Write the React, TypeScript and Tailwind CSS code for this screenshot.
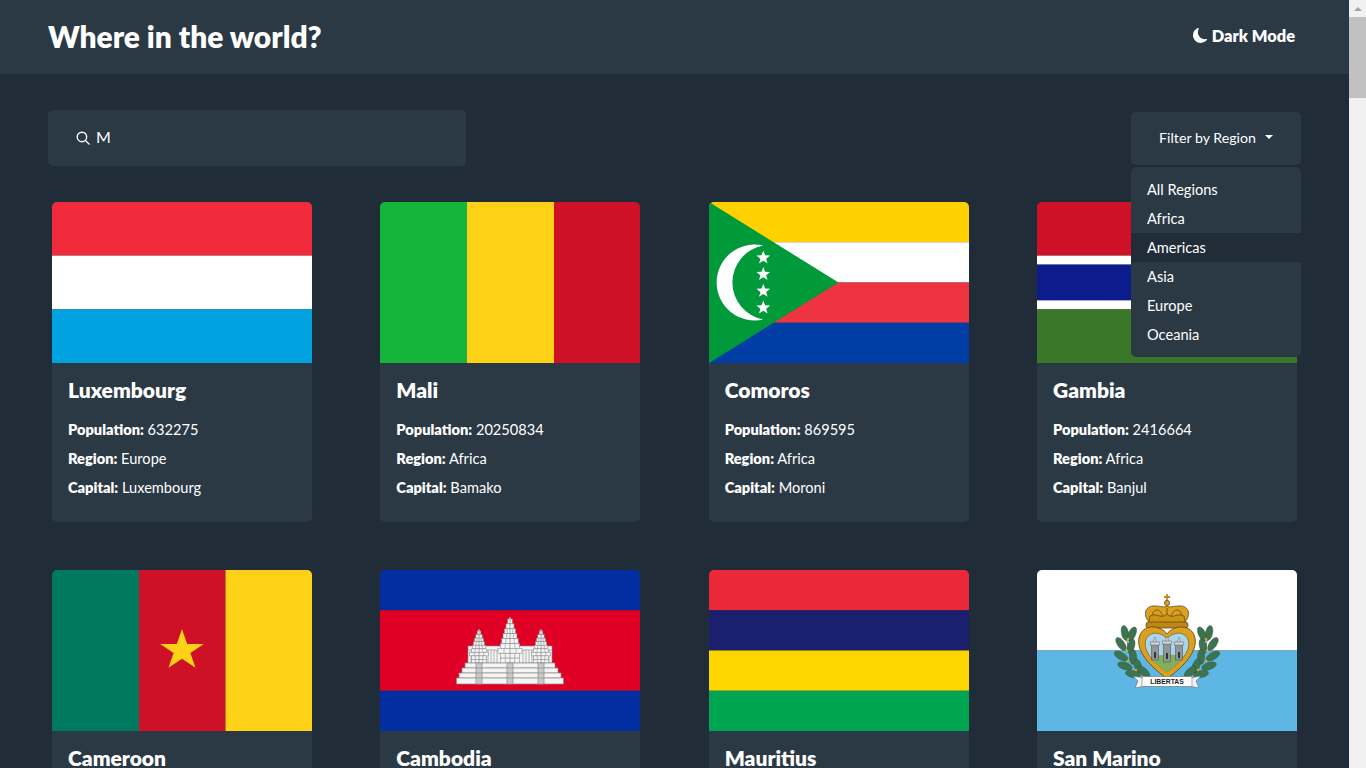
import React from 'react';

const starPoints = (cx: number, cy: number, r: number, inner = 0.42) =>
  Array.from({ length: 10 }, (_, i) => {
    const a = -Math.PI / 2 + (i * Math.PI) / 5;
    const d = i % 2 === 0 ? r : r * inner;
    return `${cx + d * Math.cos(a)},${cy + d * Math.sin(a)}`;
  }).join(' ');

const FlagSvg = ({ children }: { children: React.ReactNode }) => (
  <svg viewBox="0 0 260 161" preserveAspectRatio="none" className="block w-full h-full">
    {children}
  </svg>
);

const Stripes = ({ colors }: { colors: [string, number][] }) => {
  const total = colors.reduce((s, c) => s + c[1], 0);
  let y = 0;
  return (
    <>
      {colors.map(([c, n], i) => {
        const h = (n / total) * 161;
        const el = <rect key={i} x="0" y={y} width="260" height={h} fill={c} />;
        y += h;
        return el;
      })}
    </>
  );
};

const Luxembourg = () => (
  <FlagSvg>
    <Stripes colors={[['#EF2B3C', 1], ['#FFFFFF', 1], ['#00A3E0', 1]]} />
  </FlagSvg>
);

const Mali = () => (
  <FlagSvg>
    <rect width="87" height="161" fill="#14B53A" />
    <rect x="87" width="87" height="161" fill="#FCD116" />
    <rect x="174" width="86" height="161" fill="#CE1126" />
  </FlagSvg>
);

const Comoros = () => (
  <FlagSvg>
    <Stripes colors={[['#FFD100', 1], ['#FFFFFF', 1], ['#EF3340', 1], ['#003DA5', 1]]} />
    <polygon points="0,0 129.5,80.5 0,161" fill="#009A3B" />
    <path d="M54.3 43.5 A38 38 0 1 0 54.3 117.5 A37.6 37.6 0 0 1 54.3 43.5 Z" fill="#fff" />
    {[55.7, 72.3, 89, 105.7].map((y) => (
      <polygon key={y} points={starPoints(54.3, y, 7.2)} fill="#fff" />
    ))}
  </FlagSvg>
);

const Gambia = () => (
  <FlagSvg>
    <Stripes colors={[['#CE1126', 6], ['#FFFFFF', 1], ['#0C1C8C', 4], ['#FFFFFF', 1], ['#3A7728', 6]]} />
  </FlagSvg>
);

const Cameroon = () => (
  <FlagSvg>
    <rect width="87" height="161" fill="#007A5E" />
    <rect x="87" width="86.5" height="161" fill="#CE1126" />
    <rect x="173.5" width="86.5" height="161" fill="#FCD116" />
    <polygon points={starPoints(0, 0, 23, 0.382)} fill="#FCD116" transform="translate(130 80.5) scale(1 0.93)" />
  </FlagSvg>
);

// stacked tiers, wider as they go down, like the towers in the reference
const Tower = ({ x, top, base, w }: { x: number; top: number; base: number; w: number }) => {
  const tiers = 9;
  const h = (base - top - 2) / tiers;
  return (
    <g stroke="#8a8a8a" strokeWidth="0.55" fill="#f4f4f4">
      <path d={`M${x} ${top} L${x + 1.6} ${top + 3} L${x - 1.6} ${top + 3} Z`} />
      {Array.from({ length: tiers }, (_, i) => {
        const t = (i + 1) / tiers;
        const half = (w / 2) * (i > 5 ? 0.78 + (i === 6 ? 0.22 : 0) : Math.pow(t * 1.5, 0.8) * 0.8);
        return (
          <g key={i}>
            <rect x={x - half} y={top + 2 + i * h} width={half * 2} height={h} />
            <line x1={x} x2={x} y1={top + 2 + i * h} y2={top + 2 + (i + 1) * h} stroke="#6f6f6f" />
            {half > 4 && <line x1={x - half / 2} x2={x - half / 2} y1={top + 2 + i * h} y2={top + 2 + (i + 1) * h} />}
            {half > 4 && <line x1={x + half / 2} x2={x + half / 2} y1={top + 2 + i * h} y2={top + 2 + (i + 1) * h} />}
          </g>
        );
      })}
    </g>
  );
};

const Cambodia = () => (
  <FlagSvg>
    <Stripes colors={[['#032EA1', 1], ['#E00025', 2], ['#032EA1', 1]]} />
    <g stroke="#8a8a8a" strokeWidth="0.6" fill="#f4f4f4">
      <rect x="88" y="76" width="84" height="17" />
      {[108, 111, 114, 117, 143, 146, 149, 152, 91, 169].map((x) => (
        <line key={x} x1={x} x2={x} y1="80" y2="93" />
      ))}
      <line x1="88" x2="172" y1="80" y2="80" />
    </g>
    <Tower x={99} top={59} base={93} w={19} />
    <Tower x={161} top={59} base={93} w={19} />
    <Tower x={130} top={47} base={93} w={24} />
    <g stroke="#8a8a8a" strokeWidth="0.7" fill="#f4f4f4">
      <rect x="85" y="93" width="90" height="5" />
      <rect x="82" y="98" width="96" height="5" />
      <rect x="79" y="103" width="102" height="5" />
      <rect x="76.5" y="108" width="107" height="6" />
      {[96, 127, 158].map((x) => (
        <g key={x}>
          <rect x={x} y="93" width="6" height="21" fill="#c9c9c9" />
          <line x1={x} x2={x + 6} y1="98" y2="98" />
          <line x1={x} x2={x + 6} y1="103" y2="103" />
          <line x1={x} x2={x + 6} y1="108" y2="108" />
        </g>
      ))}
    </g>
  </FlagSvg>
);

const Mauritius = () => (
  <FlagSvg>
    <Stripes colors={[['#EA2839', 1], ['#1A206D', 1], ['#FFD500', 1], ['#00A551', 1]]} />
  </FlagSvg>
);

const Laurel = () => (
  <g>
    <path d="M112 108 C98 100 90 84 89 60" fill="none" stroke="#6b5a2a" strokeWidth="0.8" />
    {[
      [88, 63, -12],
      [95, 64, 25],
      [84, 74, -35],
      [94, 76, 15],
      [84, 86, -60],
      [96, 87, 0],
      [88, 96, -72],
      [101, 96, -20],
      [96, 104, -80],
      [107, 102, -45],
    ].map(([x, y, r], i) => (
      <ellipse key={i} cx={x} cy={y} rx="3.6" ry="7.6" fill="#3d7350" stroke="#2a4f36" strokeWidth="0.4" transform={`rotate(${r} ${x} ${y})`} />
    ))}
    {[
      [91, 69],
      [90, 81],
      [91, 91],
      [99, 100],
      [107, 107],
    ].map(([x, y], i) => (
      <circle key={i} cx={x} cy={y} r="1.3" fill="#d9a21f" />
    ))}
  </g>
);

const SanMarino = () => (
  <FlagSvg>
    <Stripes colors={[['#FFFFFF', 1], ['#5EB6E4', 1]]} />
    <Laurel />
    <g transform="matrix(-1 0 0 1 260 0)">
      <Laurel />
    </g>
    {/* crown */}
    <g stroke="#6f4a0c" strokeWidth="0.8">
      <path d="M130 24 v7 M127 27 h6" stroke="#b88a2a" strokeWidth="1.8" fill="none" />
      <circle cx="130" cy="33" r="2.6" fill="#d9a021" />
      <path d="M112 52 C105 44 109 35 118 36 C124 36 127 38 130 36 C133 38 136 36 142 36 C151 35 155 44 148 52 Z" fill="#d9a021" />
      <path d="M117 51 C114 45 116 40 120 40 C124 40 126 45 126 50 M143 51 C146 45 144 40 140 40 C136 40 134 45 134 50 M130 38 V50" fill="none" />
      <path d="M113 46 C120 42 124 50 130 44 C136 50 140 42 147 46 L149 56 H111 Z" fill="#c99417" />
      <rect x="109" y="52" width="42" height="6" rx="2.5" fill="#bd8716" />
    </g>
    {/* shield */}
    <path d="M130 64 C124 55 105 53 102 68 C99 84 118 100 130 108.5 C142 100 161 84 158 68 C155 53 136 55 130 64 Z" fill="#d9a021" stroke="#6f4a0c" strokeWidth="0.9" />
    <path d="M130 69 C124 61 111 61 108.5 71 C106 83 120 95 130 102 C140 95 154 83 151.5 71 C149 61 136 61 130 69 Z" fill="#a9d4ea" stroke="#6f4a0c" strokeWidth="0.6" />
    <path d="M113 88 C120 84 136 84 147 86 C143 92 136 97 130 102 C123 97 117 92 113 88 Z" fill="#7fb05a" />
    {/* towers */}
    {[118, 130, 142].map((x, i) => (
      <g key={x}>
        <rect x={x - 3.5} y={i === 1 ? 73 : 74} width="7" height={i === 1 ? 19 : 16} fill="#8f979b" stroke="#444" strokeWidth="0.5" />
        <rect x={x - 4.5} y={i === 1 ? 71 : 72} width="9" height="3" fill="#d5d9db" stroke="#444" strokeWidth="0.4" />
        <rect x={x - 1} y={i === 1 ? 83 : 82} width="2" height="6" fill="#333" />
        <path d={`M${x - 2} ${i === 1 ? 71 : 72} L${x} ${i === 1 ? 66 : 67} L${x + 2} ${i === 1 ? 71 : 72} Z`} fill="#c7ccce" stroke="#444" strokeWidth="0.3" />
      </g>
    ))}
    {/* ribbon */}
    <path d="M96 106 L108 108 V116 L98 118 L101 111 Z M164 106 L152 108 V116 L162 118 L159 111 Z" fill="#f4f4f4" stroke="#555" strokeWidth="0.5" />
    <rect x="105" y="106.5" width="50" height="10" rx="1" fill="#fff" stroke="#555" strokeWidth="0.5" />
    <text x="130" y="114" textAnchor="middle" fontSize="6.8" fontWeight="700" fill="#222" fontFamily="Liberation Sans, sans-serif">
      LIBERTAS
    </text>
  </FlagSvg>
);

const countries = [
  { name: 'Luxembourg', population: 632275, region: 'Europe', capital: 'Luxembourg', Flag: Luxembourg },
  { name: 'Mali', population: 20250834, region: 'Africa', capital: 'Bamako', Flag: Mali },
  { name: 'Comoros', population: 869595, region: 'Africa', capital: 'Moroni', Flag: Comoros },
  { name: 'Gambia', population: 2416664, region: 'Africa', capital: 'Banjul', Flag: Gambia },
  { name: 'Cameroon', population: 26545864, region: 'Africa', capital: 'Yaoundé', Flag: Cameroon },
  { name: 'Cambodia', population: 16718971, region: 'Asia', capital: 'Phnom Penh', Flag: Cambodia },
  { name: 'Mauritius', population: 1265740, region: 'Africa', capital: 'Port Louis', Flag: Mauritius },
  { name: 'San Marino', population: 33938, region: 'Europe', capital: 'City of San Marino', Flag: SanMarino },
];

const regions = ['All Regions', 'Africa', 'Americas', 'Asia', 'Europe', 'Oceania'];

const InfoRow = ({ label, value }: { label: string; value: string | number }) => (
  <p className="h-[29px] leading-[29px] text-[14.6px]">
    <b className="font-extrabold">{label}:</b> <span className="font-normal">{value}</span>
  </p>
);

export default function App() {
  return (
    <div className="flex h-screen overflow-hidden bg-[#202c37] text-white font-['Lato',sans-serif]">
      <div className="flex-1 min-w-0 overflow-hidden">
        <header className="h-[74px] bg-[#2b3945] pl-12 pr-[54px] flex items-center justify-between">
          <h1 className="text-[29.9px] leading-[36px] font-extrabold -mt-0.5">Where in the world?</h1>
          <div className="flex items-center gap-1 text-[16.4px] font-extrabold -mt-0.5">
            <svg viewBox="0 0 16 16" className="w-[15px] h-[15px] fill-white">
              <path d="M6 .278a.768.768 0 0 1 .08.858 7.208 7.208 0 0 0-.878 3.46c0 4.021 3.278 7.277 7.318 7.277.527 0 1.04-.055 1.533-.16a.787.787 0 0 1 .81.316.733.733 0 0 1-.031.893A8.349 8.349 0 0 1 8.344 16C3.734 16 0 12.286 0 7.71 0 4.266 2.114 1.312 5.124.06A.752.752 0 0 1 6 .278z" />
            </svg>
            <span>Dark Mode</span>
          </div>
        </header>

        <main className="pt-9">
          <div className="px-12 flex justify-between items-start">
            <div className="w-[418px] h-14 rounded-[5px] bg-[#2b3945] flex items-center pl-7 gap-1.5">
              <svg viewBox="0 0 16 16" className="w-[14px] h-[14px]" fill="none" stroke="#fff" strokeWidth="1.6">
                <circle cx="6.8" cy="6.8" r="5.4" />
                <path d="M10.8 10.8 L15 15" strokeLinecap="round" />
              </svg>
              <input defaultValue="M" className="flex-1 bg-transparent text-base outline-none text-white -mt-0.5" />
            </div>

            <div className="relative mt-0.5 w-[170px]">
              <button className="w-full h-[53px] pb-0.5 rounded-[5px] bg-[#2b3945] flex items-center justify-center gap-[9px] text-[14.2px]">
                Filter by Region
                <span className="border-x-[4.5px] border-t-[4.5px] border-x-transparent border-t-white mb-0.5" />
              </button>
              <ul className="absolute z-10 top-[55px] left-0 w-full h-[190px] rounded-[5px] bg-[#2b3945] py-2 text-[14.6px]">
                {regions.map((r) => (
                  <li key={r} className={`h-[29px] leading-[29px] px-4 ${r === 'Americas' ? 'bg-[#202c37]' : ''}`}>
                    {r}
                  </li>
                ))}
              </ul>
            </div>
          </div>

          <div className="mt-9 px-[52px] flex flex-wrap justify-between gap-y-12">
            {countries.map(({ name, population, region, capital, Flag }) => (
              <div key={name} className="w-[260px] h-[320px] rounded-[5px] overflow-hidden bg-[#2b3945]">
                <div className="h-[161px]">
                  <Flag />
                </div>
                <div className="pt-[15px] px-4">
                  <h2 className="text-[21px] leading-6 font-extrabold mb-[13px]">{name}</h2>
                  <InfoRow label="Population" value={population} />
                  <InfoRow label="Region" value={region} />
                  <InfoRow label="Capital" value={capital} />
                </div>
              </div>
            ))}
          </div>
        </main>
      </div>

      {/* the browser's scrollbar, as it shows in the reference */}
      <aside className="w-[17px] shrink-0 bg-[#f1f1f1] flex flex-col items-center">
        <div className="h-[17px] w-full flex items-center justify-center">
          <span className="border-x-[4px] border-b-[4px] border-x-transparent border-b-[#a3a3a3]" />
        </div>
        <div className="w-full h-[81px] bg-[#c1c1c1]" />
      </aside>
    </div>
  );
}
